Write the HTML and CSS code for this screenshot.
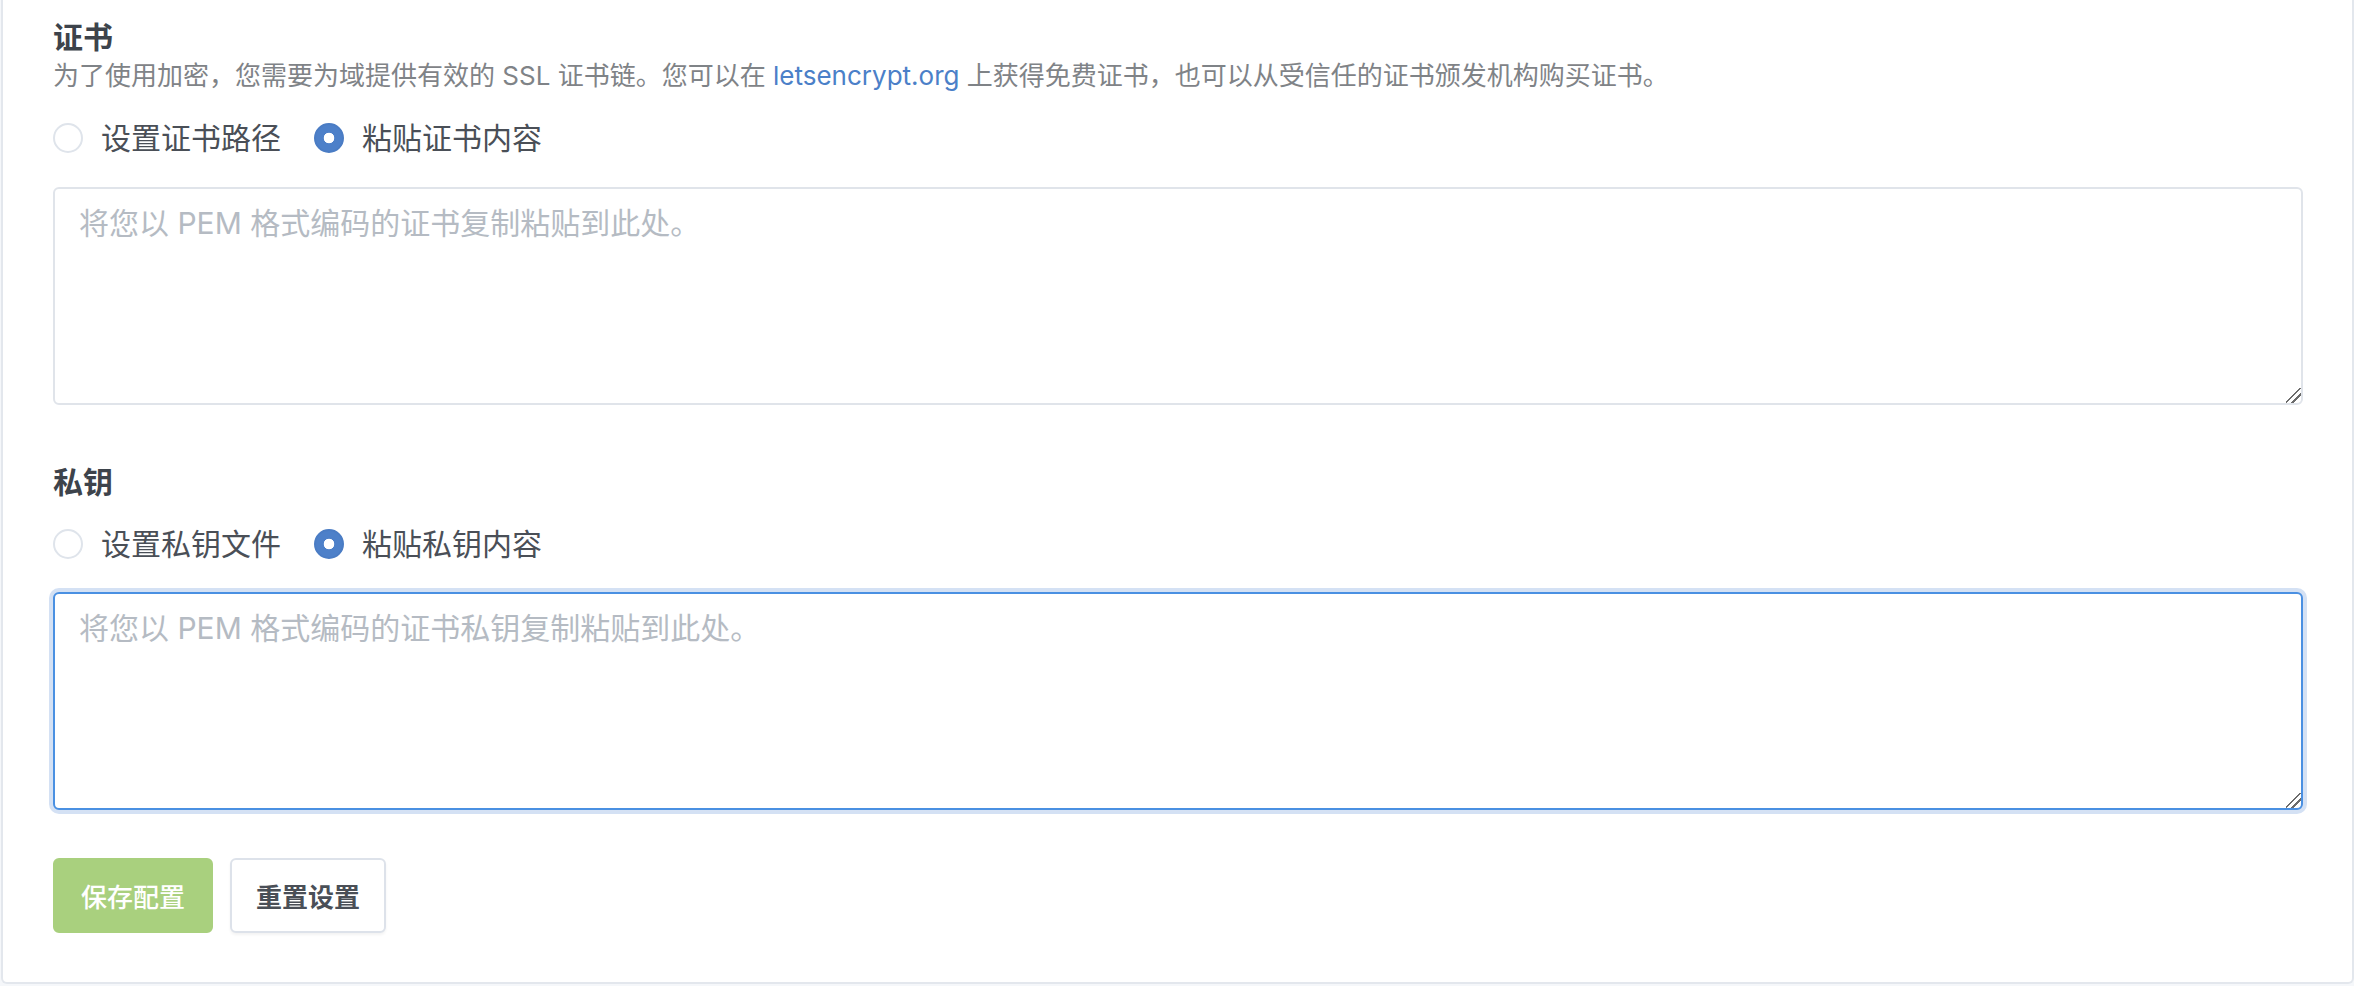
FILE: index.html
```html
<!DOCTYPE html>
<html lang="zh-CN">
<head>
  <meta charset="UTF-8">
  <meta name="viewport" content="width=device-width, initial-scale=1.0">
  <title>SSL 证书设置</title>
  <link rel="stylesheet" href="styles.css">
</head>
<body>
<div class="panel">
  <section class="field">
    <h3 class="field-title">证书</h3>
    <p class="field-help">为了使用加密，您需要为域提供有效的 SSL 证书链。您可以在 <a href="#">letsencrypt.org</a> 上获得免费证书，也可以从受信任的证书颁发机构购买证书。</p>
    <div class="radio-row">
      <label class="radio"><input type="radio" name="cert-mode" value="path"><span>设置证书路径</span></label>
      <label class="radio"><input type="radio" name="cert-mode" value="paste" checked><span>粘贴证书内容</span></label>
    </div>
    <textarea class="code-input" placeholder="将您以 PEM 格式编码的证书复制粘贴到此处。"></textarea>
  </section>

  <section class="field field-next">
    <h3 class="field-title">私钥</h3>
    <div class="radio-row radio-row-tight">
      <label class="radio"><input type="radio" name="key-mode" value="file"><span>设置私钥文件</span></label>
      <label class="radio"><input type="radio" name="key-mode" value="paste" checked><span>粘贴私钥内容</span></label>
    </div>
    <textarea class="code-input is-focused" placeholder="将您以 PEM 格式编码的证书私钥复制粘贴到此处。"></textarea>
  </section>

  <div class="actions">
    <button class="btn btn-primary" disabled>保存配置</button>
    <button class="btn btn-default">重置设置</button>
  </div>
</div>
</body>
</html>
```

FILE: styles.css
```css
body {
  margin: 0;
  background-color: #f5f7fa;
  font-family: Inter, "Noto Sans CJK SC", sans-serif;
}
.panel {
  margin: 0 0 2px 1px;
  padding: 17px 49px 49px 50px;
  background-color: #fff;
  border: 2px solid #e3e7ed;
  border-top: none;
  border-radius: 0 0 6px 6px;
}
.field-title {
  margin: 0;
  font-size: 30px;
  line-height: 40px;
  font-weight: 700;
  color: #3d434b;
}
.field-help {
  margin: 1px 0 0;
  font-size: 26px;
  line-height: 36px;
  color: #7f8387;
}
.field-help a {
  color: #4b80c8;
  text-decoration: none;
}
.radio-row {
  display: flex;
  align-items: center;
  gap: 33px;
  height: 44px;
  margin-top: 22px;
}
.radio-row-tight {
  margin-top: 20px;
}
.radio {
  display: flex;
  align-items: center;
  gap: 18px;
  font-size: 30px;
  line-height: 44px;
  color: #4a4f57;
  cursor: pointer;
}
.radio input {
  appearance: none;
  margin: 0;
  width: 30px;
  height: 30px;
  border: 2px solid #dfe4eb;
  border-radius: 50%;
  background-color: #fff;
}
.radio input:checked {
  border-color: #4a7cc4;
  background: radial-gradient(circle, #fff 0 5px, #4d80c9 5.6px);
}
.code-input {
  display: block;
  box-sizing: border-box;
  width: 100%;
  height: 218px;
  margin-top: 27px;
  padding: 12px 24px;
  border: 2px solid #e0e4ea;
  border-radius: 6px;
  font-family: Inter, "Noto Sans CJK SC", sans-serif;
  font-size: 30px;
  line-height: 44px;
  color: #4a4f57;
  resize: vertical;
  outline: none;
}
.code-input::placeholder {
  color: #b5bbc3;
}
.code-input::-webkit-resizer {
  background: linear-gradient(135deg, transparent 0 44%, #6b6b6b 44% 52%, transparent 52% 66%, #6b6b6b 66% 74%, transparent 74%);
}
.code-input.is-focused {
  margin-top: 26px;
  border-color: #4a90e2;
  box-shadow: 0 0 0 4px #d4e1f4;
}
.field-next {
  margin-top: 57px;
}
.actions {
  display: flex;
  gap: 17px;
  margin-top: 48px;
}
.btn {
  height: 75px;
  border: 2px solid #dde2ea;
  border-radius: 6px;
  font-family: Inter, "Noto Sans CJK SC", sans-serif;
  font-size: 26px;
  cursor: pointer;
}
.btn-primary {
  padding: 0 26px;
  border-color: #a9d07e;
  background-color: #a9d07e;
  color: #fff;
  font-weight: 500;
}
.btn-default {
  padding: 0 24px;
  background-color: #fff;
  color: #4a4f57;
  font-weight: 700;
  box-shadow: 0 2px 3px rgba(0, 0, 0, 0.05);
}
```
